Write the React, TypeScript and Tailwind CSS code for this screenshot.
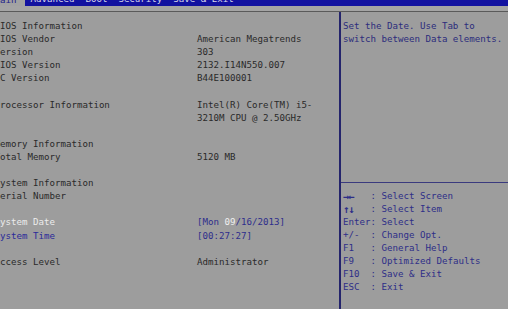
import React from "react";

const mono = { fontFamily: '"DejaVu Sans Mono", "Liberation Mono", monospace' };

type Row = { label?: string; value?: React.ReactNode; labelClass?: string; valueClass?: string };

const rows: Row[] = [
  { label: "BIOS Information" },
  { label: "BIOS Vendor", value: "American Megatrends" },
  { label: "Version", value: "303" },
  { label: "BIOS Version", value: "2132.I14N550.007" },
  { label: "EC Version", value: "B44E100001" },
  {},
  { label: "Processor Information", value: "Intel(R) Core(TM) i5-" },
  { value: "3210M CPU @ 2.50GHz" },
  {},
  { label: "Memory Information" },
  { label: "Total Memory", value: "5120 MB" },
  {},
  { label: "System Information" },
  { label: "Serial Number" },
  {},
  {
    label: "System Date",
    labelClass: "text-[#ececec]",
    valueClass: "text-[#2e2e8c]",
    value: (
      <>
        [Mon <span className="text-[#f0f0f0]">09</span>/16/2013]
      </>
    ),
  },
  { label: "System Time", labelClass: "text-[#2a2a9a]", valueClass: "text-[#2e2e8c]", value: "[00:27:27]" },
  {},
  { label: "Access Level", value: "Administrator" },
];

const keys: [string, string, boolean][] = [
  ["→←", "Select Screen", true],
  ["↑↓", "Select Item", true],
  ["Enter", "Select", false],
  ["+/-", "Change Opt.", false],
  ["F1", "General Help", false],
  ["F9", "Optimized Defaults", false],
  ["F10", "Save & Exit", false],
  ["ESC", "Exit", false],
];

export default function App() {
  return (
    <div
      className="w-[508px] h-[309px] overflow-hidden bg-[#9d9d9d] flex flex-col text-[9.15px] leading-[13.1px] whitespace-pre"
      style={mono}
    >
      {/* tab bar */}
      <div className="h-[6px] bg-[#1212a0] overflow-hidden shrink-0">
        <div className="flex -mt-[7px] -ml-[5.5px] text-[#d8d8ec]">
          <span className="bg-[#a2a2a2] text-[#22228a] pr-[8.5px] pt-[1px]">Main</span>
          <span className="ml-[5.5px]">Advanced  Boot  Security  Save & Exit</span>
        </div>
      </div>
      <div className="h-[5px] bg-[#a4a4a4] shrink-0" />
      <div className="h-[1px] bg-[#5a5a5a] shrink-0" />

      {/* body */}
      <div className="flex flex-1 min-h-0">
        <div className="w-[341px] shrink-0 border-r-2 border-[#24246c] pt-[8px] text-[#2a2a2a]">
          <div className="-ml-[5.5px] flex flex-col">
            {rows.map((r, i) => (
              <div key={i} className="flex h-[13.1px]">
                <span className={`w-[202.5px] shrink-0 ${r.labelClass ?? ""}`}>{r.label ?? ""}</span>
                <span className={r.valueClass ?? ""}>{r.value ?? ""}</span>
              </div>
            ))}
          </div>
        </div>

        <div className="flex-1 flex flex-col">
          <div className="h-[171px] shrink-0 border-b border-[#3a3a7e] pt-[7.5px] pl-[2px] text-[#2c2c7c]">
            <div>Set the Date. Use Tab to</div>
            <div>switch between Data elements.</div>
          </div>
          <div className="pt-[6.5px] pl-[2px] text-[#2e2e88] flex flex-col">
            {keys.map(([k, d, b]) => (
              <div key={k} className="flex h-[13.1px]">
                <span className={`w-[27.5px] shrink-0 ${b ? "font-bold text-[10.5px] tracking-[-1px]" : ""}`}>{k}</span>
                <span>: {d}</span>
              </div>
            ))}
          </div>
        </div>
      </div>
    </div>
  );
}
